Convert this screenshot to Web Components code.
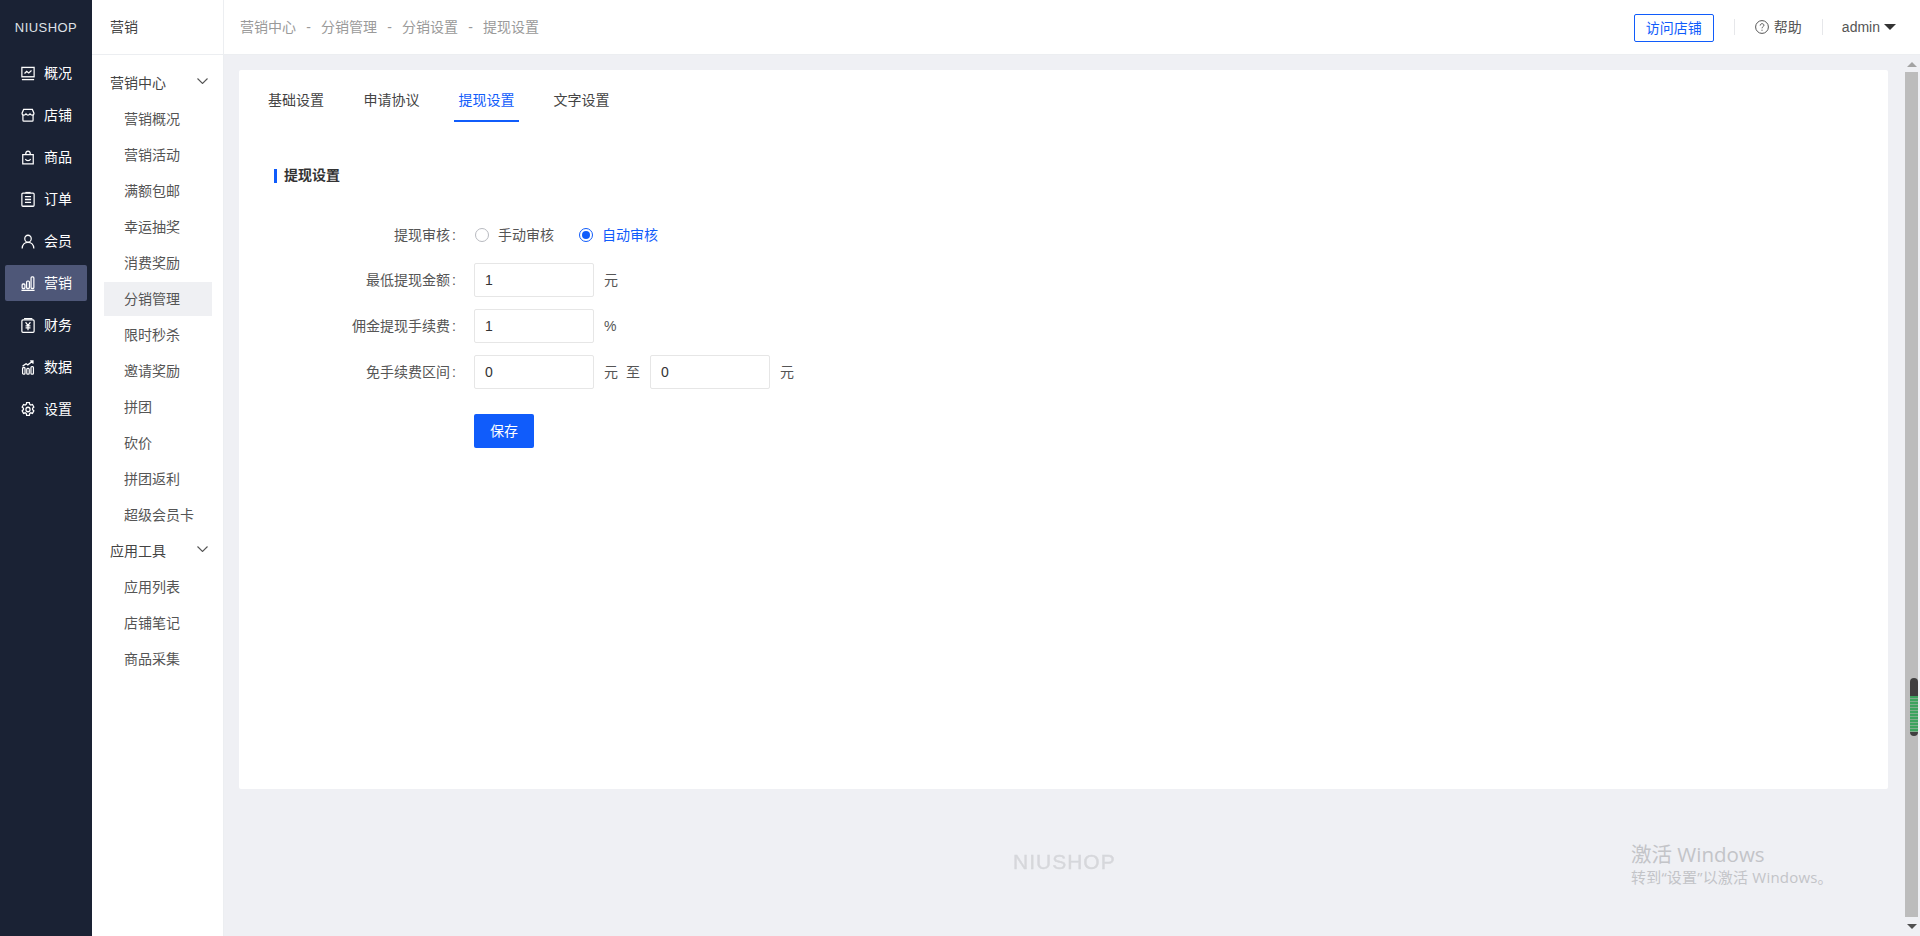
<!DOCTYPE html>
<html lang="zh-CN">
<head>
<meta charset="utf-8">
<title>提现设置</title>
<style>
html,body{margin:0;height:936px;overflow:hidden;background:#eff0f4;font:14px/20px "Liberation Sans","Noto Sans CJK SC",sans-serif;color:#333}
</style>
</head>
<body>
<ns-app>
  <ns-rail slot="rail"></ns-rail>
  <ns-subnav slot="subnav"></ns-subnav>
  <ns-topbar slot="topbar"></ns-topbar>
  <ns-card slot="content">
    <ns-tabs active="2" items="基础设置,申请协议,提现设置,文字设置"></ns-tabs>
    <ns-title>提现设置</ns-title>
    <ns-field label="提现审核" class="radio"><ns-radio>手动审核</ns-radio><ns-radio checked>自动审核</ns-radio></ns-field>
    <ns-field label="最低提现金额"><ns-input value="1"></ns-input><ns-unit>元</ns-unit></ns-field>
    <ns-field label="佣金提现手续费"><ns-input value="1"></ns-input><ns-unit>%</ns-unit></ns-field>
    <ns-field label="免手续费区间"><ns-input value="0"></ns-input><ns-unit>元</ns-unit><ns-unit to>至</ns-unit><ns-input value="0"></ns-input><ns-unit>元</ns-unit></ns-field>
    <ns-field label="" class="action"><ns-button>保存</ns-button></ns-field>
  </ns-card>
  <ns-scrollbar slot="scrollbar"></ns-scrollbar>
  <ns-watermark slot="overlay"></ns-watermark>
</ns-app>
<script>
const FONT='"Liberation Sans","Noto Sans CJK SC",sans-serif';
function def(name,html,init){
  customElements.define(name,class extends HTMLElement{
    connectedCallback(){
      if(this.shadowRoot)return;
      const r=this.attachShadow({mode:'open'});
      r.innerHTML=typeof html==='function'?html(this):html;
      if(init)init(this,r);
    }
  });
}
const I={
 overview:'<rect x="1" y="1.500" width="14" height="10" /><path d="M4 8l2.500-2.200 2.400 1.600L12 4.800"/><path d="M1 14.500h14"/>',
 store:'<path d="M3 1.500h10l1.800 4c0 1.200-1 2-2.200 2-1 0-1.800-.5-2.300-1.200-.5.700-1.400 1.200-2.300 1.200s-1.800-.5-2.300-1.200c-.5.700-1.300 1.200-2.300 1.200-1.200 0-2.200-.8-2.200-2z"/><path d="M2.200 7.500v5.500a1 1 0 0 0 1 1h9.600a1 1 0 0 0 1-1V7.500"/>',
 goods:'<path d="M2 5h12v9.800H2z"/><path d="M5.300 5c0-5 5.400-5 5.400 0"/><path d="M5 9.500c1 2.400 5 2.400 6 0"/>',
 order:'<rect x="1" y="1.200" width="14" height="14" rx="1.200"/><path d="M4.500 5h7M4.500 8h7M4.500 11h7"/><path d="M5 .6h6" />',
 member:'<circle cx="8" cy="5" r="3.700"/><path d="M1.300 15.500c.4-4.500 3-6.500 6.700-6.500s6.300 2 6.700 6.500"/>',
 market:'<path d="M.5 15.300h15"/><rect x="1.300" y="8.500" width="3.200" height="4.800" rx="1"/><rect x="6.400" y="5.500" width="3.200" height="7.800" rx="1"/><rect x="11.500" y="1" width="3.200" height="12.300" rx="1"/>',
 finance:'<rect x="1" y="2" width="14" height="13.400" rx="1.200"/><path d="M3.500 .7h9.500"/><path d="M5.200 4.500L8 7.800l2.800-3.300M8 7.800v5.200M5.200 8.300h5.600M5.200 10.600h5.600"/>',
 data:'<rect x="1.800" y="8" width="2.800" height="7" rx="1"/><rect x="6.600" y="9" width="2.800" height="6" rx="1"/><rect x="11.400" y="7" width="2.800" height="8" rx="1"/><path d="M1.800 6.500l4-2.500 2 1.200L13 1.300M10.500 1h3.200v3"/>',
 gear:'<path d="M6.400.6h3.200l.4 2 1.200.7 1.900-.7 1.600 2.800-1.500 1.300v1.400l1.500 1.300-1.600 2.800-1.900-.7-1.200.7-.4 2H6.400l-.4-2-1.200-.7-1.900.7-1.600-2.800 1.500-1.300V6.700L1.300 5.400l1.600-2.800 1.900.7 1.200-.7z"/><circle cx="8" cy="8" r="2.400"/>'
};
const NAV=[['概况','overview'],['店铺','store'],['商品','goods'],['订单','order'],['会员','member'],['营销','market',1],['财务','finance'],['数据','data'],['设置','gear']];
def('ns-app',`<style>
:host{display:flex;width:1920px;height:936px;position:relative;overflow:hidden}
.main{flex:1;min-width:0;display:flex;flex-direction:column}
.body{flex:1;min-height:0;display:flex}
.scroll{flex:1;min-width:0;padding:15px 16px 0 15px;display:flex;flex-direction:column}
</style>
<slot name="rail"></slot><slot name="subnav"></slot>
<div class="main"><slot name="topbar"></slot>
<div class="body"><div class="scroll"><slot name="content"></slot></div><slot name="scrollbar"></slot></div></div>
<slot name="overlay"></slot>`);
def('ns-rail',`<style>
:host{display:block;width:92px;flex:none;background:#1a2234;color:#fff;font-family:${FONT}}
.logo{height:55px;box-sizing:border-box;display:flex;align-items:center;justify-content:center;padding-top:1px;font-size:13px;letter-spacing:.45px;color:#dfe1e6;font-weight:400}
.item{height:36px;margin:0 5px 6px;border-radius:2px;display:flex;align-items:center;padding-left:16px;gap:9px;line-height:20px;color:#fff}
.item.on{background:#4e5778}
svg{width:14px;height:15px;flex:none;fill:none;stroke:#fff;stroke-width:1.400;overflow:visible}
span{width:28px;white-space:nowrap;margin-top:-1px}
</style>
<div class="logo">NIUSHOP</div>
${NAV.map(n=>`<div class="item${n[2]?' on':''}"><svg viewBox="0 0 16 16" preserveAspectRatio="none">${I[n[1]]}</svg><span>${n[0]}</span></div>`).join('')}`);
const GROUPS=[['营销中心',['营销概况','营销活动','满额包邮','幸运抽奖','消费奖励','分销管理','限时秒杀','邀请奖励','拼团','砍价','拼团返利','超级会员卡']],['应用工具',['应用列表','店铺笔记','商品采集']]];
def('ns-subnav',`<style>
:host{display:block;width:132px;flex:none;box-sizing:border-box;background:#fff;border-right:1px solid #eceef1;font-family:${FONT};color:#444}
.head{height:55px;box-sizing:border-box;border-bottom:1px solid #eceef1;padding-left:18px;line-height:54px;color:#444}
.list{padding-top:10px;display:flex;flex-direction:column}
.g{height:36px;flex:none;display:flex;align-items:center;justify-content:space-between;padding:0 15px 0 18px}
.g svg{width:11px;height:6px;fill:none;stroke:#555;stroke-width:1.100;margin-top:-4px}
.i{height:34px;flex:none;margin:1px 11px 1px 12px;display:flex;align-items:center;color:#555;white-space:nowrap}
.i span{margin-left:20px}
.i.on{background:#eff0f3}
</style>
<div class="head">营销</div>
<div class="list">${GROUPS.map(g=>`<div class="g"><span>${g[0]}</span><svg viewBox="0 0 11 6"><path d="M.5.500L5.500 5.500 10.500.500"/></svg></div>${g[1].map(t=>`<div class="i${t==='分销管理'?' on':''}"><span>${t}</span></div>`).join('')}`).join('')}</div>`);
def('ns-topbar',`<style>
:host{display:flex;height:55px;flex:none;box-sizing:border-box;background:#fff;border-bottom:1px solid #eceef1;align-items:center;padding:0 24px 0 16px;font-family:${FONT}}
.crumbs{flex:1;display:flex;color:#9a9a9a}
.crumbs i{font-style:normal;padding:0 10px;width:5px;text-align:center}
.visit{width:80px;height:28px;box-sizing:border-box;border:1px solid #105cfb;border-radius:2px;color:#105cfb;display:flex;align-items:center;justify-content:center;margin-top:1px;background:#fff}
.sep{width:1px;height:16px;background:#e6e7ea;margin:0 20px}
.sep.last{margin-right:19px}
.help{display:flex;align-items:center;gap:5px;color:#555}
.help svg{width:14px;height:14px;fill:none;stroke:#555}
.user{display:flex;align-items:center;gap:4px;color:#555}
.caret{width:0;height:0;border:6px solid transparent;border-top:6px solid #333;border-bottom:0}
</style>
<div class="crumbs"><span>营销中心</span><i>-</i><span>分销管理</span><i>-</i><span>分销设置</span><i>-</i><span>提现设置</span></div>
<div class="visit">访问店铺</div><div class="sep"></div>
<div class="help"><svg viewBox="0 0 14 14"><circle cx="7" cy="7" r="6.400"/><path d="M5.200 5.500c0-2.400 3.700-2.400 3.700-.2 0 1.400-1.900 1.400-1.900 3"/><path d="M7 9.700v1.100"/></svg><span>帮助</span></div>
<div class="sep last"></div>
<div class="user"><span>admin</span><b class="caret"></b></div>`);
def('ns-card',`<style>
:host{display:block;height:719px;flex:none;box-sizing:border-box;background:#fff;border-radius:2px;padding:10px 24px 0;font-family:${FONT}}
</style><slot></slot>`);
def('ns-tabs',h=>{const a=+h.getAttribute('active');return `<style>
:host{display:flex;gap:29.500px}
div{height:42px;box-sizing:border-box;padding:0 5px;line-height:40px;color:#444;white-space:nowrap;border-bottom:2px solid transparent}
div.on{color:#105cfb;border-color:#105cfb;padding:0 4.500px}
</style>${h.getAttribute('items').split(',').map((t,i)=>`<div class="${i===a?'on':''}">${t}</div>`).join('')}`});
def('ns-title',`<style>
:host{display:block;margin:47px 0 35px 11px;height:14px;border-left:3px solid #105cfb;padding-left:7px;line-height:13px;font-weight:700;font-size:14px;color:#333}
</style><slot></slot>`);
def('ns-field',h=>{const t=h.getAttribute('label');return `<style>
:host{display:flex;align-items:center;min-height:34px;margin-bottom:12px}
:host(.radio){margin-bottom:11px}
:host(.action){margin-top:25px}
.l{width:193px;flex:none;text-align:right;color:#555;white-space:nowrap;margin-right:18px}
.l i{font-style:normal;margin-left:2px}
</style><div class="l">${t?t+'<i>:</i>':''}</div><slot></slot>`});
def('ns-radio',h=>{const c=h.hasAttribute('checked');return `<style>
:host{display:flex;align-items:center;margin-left:1px;margin-right:24px;color:${c?'#105cfb':'#555'}}
b{width:14px;height:14px;box-sizing:border-box;border-radius:50%;border:1px solid ${c?'#105cfb':'#b8bac0'};margin-right:9px;display:flex;align-items:center;justify-content:center}
b::after{content:"";width:8px;height:8px;border-radius:50%;background:${c?'#105cfb':'transparent'}}
</style><b></b><slot></slot>`});
def('ns-input',h=>`<style>
:host{display:flex;width:120px;height:34px;box-sizing:border-box;border:1px solid #e6e6e6;border-radius:2px;background:#fff;align-items:center;padding-left:10px;color:#333}
</style>${h.getAttribute('value')}`);
def('ns-unit',h=>`<style>
:host{display:block;margin-left:10px;color:#555;${h.hasAttribute('to')?'margin-left:8px;margin-right:10px;':''}}
</style><slot></slot>`);
def('ns-button',`<style>
:host{display:flex;width:60px;height:34px;background:#105cfb;color:#fff;border-radius:2px;align-items:center;justify-content:center}
</style><slot></slot>`);
def('ns-scrollbar',`<style>
:host{display:flex;flex-direction:column;width:16px;flex:none;box-sizing:border-box;padding:0 2px 0 1px;position:relative}
.a{height:19px;flex:none;display:flex;align-items:center;justify-content:center}
.a.up{height:17px;padding-top:1px;box-sizing:border-box}
.a b{width:0;height:0;border:5px solid transparent}
.up b{border-top:0;border-bottom:5px solid #a3a3a3}
.dn b{border-bottom:0;border-top:5px solid #505050}
.t{flex:1;background:#bcbcbc}
.m{position:absolute;right:2px;top:623px;width:8px;height:58px;box-sizing:border-box;border-radius:4px;background:#3f3f3f;padding:18px 0 4px;overflow:hidden}
.m i{display:block;height:100%;background:repeating-linear-gradient(#3da35f 0 2px,#7fae8c 2px 3px)}
</style>
<div class="a up"><b></b></div><div class="t"></div><div class="a dn"><b></b></div><div class="m"><i></i></div>`);
def('ns-watermark',`<style>
:host{position:absolute;left:0;top:0;width:0;height:0;font-family:"Open Sans","Noto Sans CJK SC",sans-serif;white-space:nowrap}
.n{position:absolute;left:1013px;top:849px;font:21px/26px "Liberation Sans",sans-serif;letter-spacing:1px;color:#d6d7db;-webkit-text-stroke:.4px #d6d7db;filter:blur(.6px)}
.w1{position:absolute;left:1631px;top:841px;font-size:20.500px;line-height:26px;color:#c3c4c8}
.w2{position:absolute;left:1631px;top:867px;font-size:15px;line-height:20px;letter-spacing:.2px;color:#c3c4c8}
</style><div class="n">NIUSHOP</div><div class="w1">激活 Windows</div><div class="w2">转到“设置”以激活 Windows。</div>`);
</script>
</body>
</html>
